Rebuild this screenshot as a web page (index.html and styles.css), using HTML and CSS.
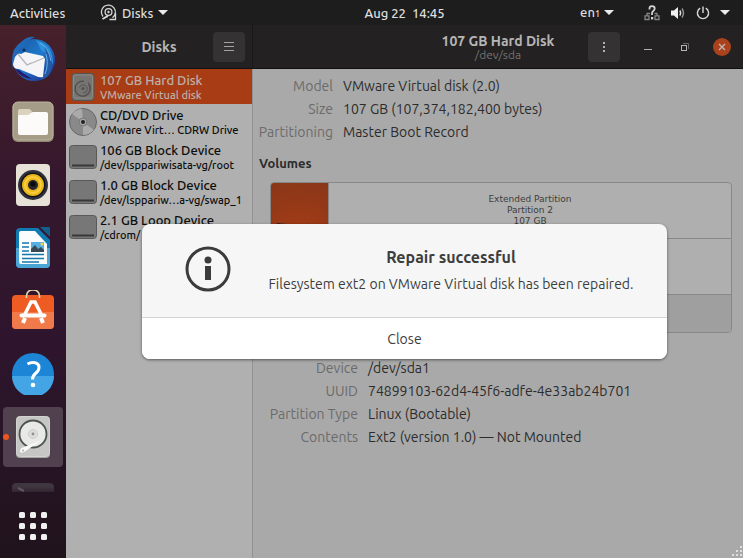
FILE: index.html
```html
<!DOCTYPE html>
<html lang="en">
<head>
<meta charset="utf-8">
<title>Disks</title>
<link rel="stylesheet" href="styles.css">
</head>
<body>
<header class="topbar">
  <button class="topbar-btn activities" type="button">Activities</button>
  <button class="topbar-btn app-menu" type="button">
    <svg width="17" height="17" viewBox="0 0 17 17" fill="none" stroke="#d6d6d6" aria-hidden="true">
      <path d="M3 12.500A7 7 0 1 1 12.500 13.700M9.500 15.500H15.500V9" stroke-width="1.300"/>
      <circle cx="8.500" cy="8" r="3.400" stroke-width="1.300"/>
      <circle cx="8.500" cy="8" r="1.200" fill="#d6d6d6" stroke="none"/>
      <path d="M2.500 15L8 11.800" stroke-width="2"/>
    </svg>
    <span>Disks</span>
    <i class="caret"></i>
  </button>
  <time class="clock">Aug 22&nbsp; 14:45</time>
  <div class="tray">
    <button class="topbar-btn lang" type="button"><span>en<small>1</small></span><i class="caret"></i></button>
    <button class="topbar-btn status" type="button" aria-label="System menu">
      <svg width="16" height="16" viewBox="0 0 16 16" fill="none" aria-hidden="true">
        <path d="M3 10.500V8.500H6M13 10.500V8.500H10.500M1 10.800H5V14.500H1ZM11 10.800H15V14.500H11Z" stroke="#858585" stroke-width="1.300"/>
        <path d="M5.500 4.500V3.500Q5.500 1.200 8 1.200Q10.700 1.200 10.700 3.600Q10.700 5.100 9.200 6Q8 6.900 8 8.500V10" stroke="#d4d4d4" stroke-width="1.800"/>
        <rect x="7" y="12" width="2.200" height="2.400" fill="#d4d4d4"/>
      </svg>
      <svg width="16" height="16" viewBox="0 0 16 16" fill="none" aria-hidden="true">
        <path d="M1 5.500H4L8 2V14L4 10.500H1Z" fill="#f0f0f0"/>
        <path d="M9.800 5.500Q11.500 8 9.800 10.500" stroke="#e0e0e0" stroke-width="1.400"/>
        <path d="M12 3.500Q15 8 12 12.500" stroke="#969696" stroke-width="1.400"/>
      </svg>
      <svg width="14" height="16" viewBox="0 0 14 16" fill="none" stroke="#d8d8d8" stroke-width="1.400" aria-hidden="true">
        <path d="M4.200 3.200A5.600 5.600 0 1 0 9.800 3.200M7 1.500V8"/>
      </svg>
      <i class="caret"></i>
    </button>
  </div>
</header>

<div class="desktop">
  <nav class="dock" aria-label="Dock">
    <div class="launchers">
      <button class="launcher" type="button" aria-label="Thunderbird">
        <svg width="46" height="46" viewBox="0 0 46 46" aria-hidden="true">
          <defs><linearGradient id="bird" x1="0" y1="0" x2="1" y2="1"><stop offset="0" stop-color="#1b579e"/><stop offset=".5" stop-color="#1e79cc"/><stop offset="1" stop-color="#241a82"/></linearGradient></defs>
          <circle cx="24" cy="24" r="21" fill="url(#bird)"/>
          <path d="M3 33Q-1 14 11 6Q17 0 25 1Q17 4 14 10Q5 15 3 33Z" fill="#2168b8"/>
          <path d="M26 4Q44 9 43 29Q40 19 31 14Z" fill="#2e91dd"/>
          <path d="M34 10Q45 20 41 35Q38 43 30 44Q41 30 34 10Z" fill="#235aa6"/>
          <path d="M30 7Q39 12 41 25M36 18Q39 28 35 38" fill="none" stroke="#61b3ea" stroke-width="1"/>
          <path d="M5 21Q8 16 11 18L15 16L33 20L35 23L33 41Q29 42 26 40L9 33Q3 33 3 28Z" fill="#f5f5f7"/>
          <path d="M8 18L17 29L34 22M17 29L21 27" fill="none" stroke="#b4b3b8" stroke-width="1.300"/>
          <path d="M5 33Q10 42 22 43Q14 38 9 34Z" fill="#2a1a6c"/>
          <circle cx="14" cy="14" r="1.500" fill="#102c54"/>
        </svg>
      </button>
      <button class="launcher" type="button" aria-label="Files">
        <svg width="42" height="42" viewBox="0 0 42 42" aria-hidden="true">
          <rect x=".5" y="1" width="41" height="40" rx="5" fill="#918873"/>
          <rect x="1" y="1" width="40" height="38" rx="5" fill="#a69d88" stroke="#bdb49f"/>
          <path d="M6 13V10Q6 8 8 8H17Q19 8 20 11L34 12V18H6Z" fill="#dcd3bf"/>
          <path d="M6 15Q6 14 8 14H16L21 11H34Q36 11 36 13V32Q36 34 34 34H8Q6 34 6 32Z" fill="#fcfbf9"/>
        </svg>
      </button>
      <button class="launcher" type="button" aria-label="Rhythmbox">
        <svg width="42" height="42" viewBox="0 0 42 42" aria-hidden="true">
          <rect x="4" y="0" width="34" height="42" rx="4" fill="#e7e2d8"/>
          <circle cx="21" cy="21" r="15" fill="#30313c"/><circle cx="21" cy="21" r="12.500" fill="#11131b"/>
          <circle cx="21" cy="21" r="11" fill="#eab51b"/><circle cx="21" cy="21" r="8" fill="none" stroke="#f8cd3e" stroke-width="2"/>
          <circle cx="21" cy="21" r="5" fill="#24262b"/><circle cx="21" cy="20" r="2.500" fill="#080a0d"/>
        </svg>
      </button>
      <button class="launcher" type="button" aria-label="LibreOffice Writer">
        <svg width="42" height="42" viewBox="0 0 42 42" aria-hidden="true">
          <path d="M8 1H26L38 13V37Q38 41 34 41H8Q4 41 4 37V5Q4 1 8 1Z" fill="#127ab2"/>
          <path d="M4 21H38V37Q38 41 34 41H8Q4 41 4 37Z" fill="#4ca6d5"/>
          <path d="M9 4H23L35 17V37H9Q7 37 7 35V6Q7 4 9 4Z" fill="#fafcfd"/>
          <path d="M28 0H37Q38 0 38 2V10Z" fill="#135f8b"/>
          <path d="M10 16H17M10 20H17M10 24H17M10 27.500H32M10 31.500H32M10 35H27" stroke="#1777aa" stroke-width="1.500"/>
          <rect x="19" y="15" width="13" height="10" fill="#58aee0"/>
          <path d="M19 25V22L23 18L26 22L29 20L32 23V25Z" fill="#384956"/><circle cx="30" cy="17" r="1.500" fill="#f1d44e"/>
        </svg>
      </button>
      <button class="launcher" type="button" aria-label="Ubuntu Software">
        <svg width="42" height="42" viewBox="0 0 42 42" aria-hidden="true">
          <rect y="5" width="42" height="34" rx="4" fill="#ee5b23"/>
          <path d="M0 22H42V35Q42 39 38 39H4Q0 39 0 35Z" fill="#f17a4a"/>
          <path d="M14.500 8V6Q15 0 21 0Q27 0 27.500 6V8" fill="none" stroke="#ead6a5" stroke-width="1.600"/>
          <g fill="none" stroke="#fff"><path d="M12.500 25L19 12H23L29.500 25" stroke-width="3.500"/><path d="M9.500 25.500H32.500" stroke-width="4" stroke-linecap="round"/><path d="M13 28L11 33M29 28L31 33" stroke-width="4"/></g>
        </svg>
      </button>
      <button class="launcher" type="button" aria-label="Help">
        <svg width="42" height="42" viewBox="0 0 42 42" aria-hidden="true">
          <circle cx="21" cy="21" r="21" fill="#1d85d6"/>
          <path d="M0 23H42A21 21 0 0 1 0 23Z" fill="#43a5e5"/>
          <path d="M15.500 11Q18 9.500 21 9.500Q27 9.500 27 14.500Q27 17.500 23.500 20.500Q20.500 23 20.500 26.500" fill="none" stroke="#fff" stroke-width="3"/>
          <circle cx="21" cy="32" r="2.300" fill="#fff"/>
        </svg>
      </button>
      <button class="launcher running" type="button" aria-label="Disks">
        <svg width="42" height="42" viewBox="0 0 42 42" aria-hidden="true">
          <rect x="4" y="0" width="34" height="42" rx="4" fill="#a5a5a3"/>
          <rect x="4.500" y=".5" width="33" height="40" rx="4" fill="#c6c6c4" stroke="#d3d3d1"/>
          <circle cx="21" cy="18" r="13.500" fill="#e9e9e8" stroke="#4c5350" stroke-width="1.800"/>
          <circle cx="21" cy="18" r="4.500" fill="#ddd" stroke="#cdcdcb"/><circle cx="21" cy="18" r="1.400" fill="#919191"/>
          <path d="M30 24L12 36Q8 38 8 35Q8 32 12 31Z" fill="#fafafa"/><circle cx="11" cy="34.500" r="1" fill="#aaa"/>
        </svg>
      </button>
      <button class="launcher" type="button" aria-label="Terminal">
        <svg width="42" height="42" viewBox="0 0 42 42" aria-hidden="true">
          <defs><linearGradient id="fade" x1="0" y1="0" x2="0" y2="1"><stop offset=".1" stop-color="#40363f"/><stop offset=".3" stop-color="#2b1f29"/></linearGradient></defs>
          <path d="M0 42V8Q0 4 5 4H37Q42 4 42 8V42Z" fill="url(#fade)"/>
          <path d="M6 9L12 12" stroke="#5e5660" stroke-width="2"/>
        </svg>
      </button>
    </div>
    <button class="launcher" type="button" aria-label="Show applications">
      <svg width="30" height="30" viewBox="0 0 30 30" fill="#f1f0f0" aria-hidden="true">
        <rect x="1" y="1" width="6" height="6" rx="1.500"/><rect x="12" y="1" width="6" height="6" rx="1.500"/><rect x="23" y="1" width="6" height="6" rx="1.500"/>
        <rect x="1" y="12" width="6" height="6" rx="1.500"/><rect x="12" y="12" width="6" height="6" rx="1.500"/><rect x="23" y="12" width="6" height="6" rx="1.500"/>
        <rect x="1" y="23" width="6" height="6" rx="1.500"/><rect x="12" y="23" width="6" height="6" rx="1.500"/><rect x="23" y="23" width="6" height="6" rx="1.500"/>
      </svg>
    </button>
  </nav>

  <div class="window">
    <aside class="sidebar">
      <div class="headerbar">
        <h1 class="title">Disks</h1>
        <div class="controls">
          <button class="menu-btn" type="button" aria-label="Menu">
            <svg width="12" height="12" viewBox="0 0 12 12" stroke="#a2a2a2" aria-hidden="true"><path d="M1 1.500H11M1 5.500H11M1 9.500H11"/></svg>
          </button>
        </div>
      </div>
      <ul class="devices">
        <li><button class="device selected" type="button">
          <svg width="28" height="28" viewBox="0 0 28 28" fill="none" aria-hidden="true">
            <rect x="3" y=".5" width="22" height="27" rx="3" fill="#777572" stroke="#565451"/>
            <rect x="4.500" y="2" width="19" height="23" rx="2" stroke="#8c8a87"/>
            <path d="M19.500 11A7.500 7.500 0 1 1 15 8.300" stroke="#4f4d4b" stroke-width="1.200"/>
            <path d="M19 9Q22 12 21 16M10.500 14.500A4 4 0 1 1 14 20" stroke="#565452"/><circle cx="14" cy="15.500" r="1.500" fill="#53514f"/>
          </svg>
          <span class="device-text"><b>107 GB Hard Disk</b><small>VMware Virtual disk</small></span></button></li>
        <li><button class="device" type="button">
          <svg width="28" height="28" viewBox="0 0 28 28" aria-hidden="true">
            <circle cx="14" cy="14" r="13.500" fill="#898989" stroke="#666"/>
            <path d="M14 14L3 6Q7 1 13 1ZM14 14L25 22Q20 27 14 27Z" fill="#aaa"/>
            <circle cx="14" cy="14" r="4" fill="#a4a4a4" stroke="#777"/><circle cx="14" cy="14" r="2" fill="#24221f"/>
          </svg>
          <span class="device-text"><b>CD/DVD Drive</b><small>VMware Virt… CDRW Drive</small></span></button></li>
        <li><button class="device" type="button">
          <svg width="28" height="28" viewBox="0 0 28 28" aria-hidden="true"><rect x=".5" y="2.500" width="27" height="23" rx="3" fill="#777" stroke="#595959"/><path d="M3 22.500H25" stroke="#383838" stroke-width="2"/></svg>
          <span class="device-text"><b>106 GB Block Device</b><small>/dev/lsppariwisata-vg/root</small></span></button></li>
        <li><button class="device" type="button">
          <svg width="28" height="28" viewBox="0 0 28 28" aria-hidden="true"><rect x=".5" y="2.500" width="27" height="23" rx="3" fill="#777" stroke="#595959"/><path d="M3 22.500H25" stroke="#383838" stroke-width="2"/></svg>
          <span class="device-text"><b>1.0 GB Block Device</b><small>/dev/lsppariw…a-vg/swap_1</small></span></button></li>
        <li><button class="device" type="button">
          <svg width="28" height="28" viewBox="0 0 28 28" aria-hidden="true"><rect x=".5" y="2.500" width="27" height="23" rx="3" fill="#777" stroke="#595959"/><path d="M3 22.500H25" stroke="#383838" stroke-width="2"/></svg>
          <span class="device-text"><b>2.1 GB Loop Device</b><small>/cdrom/</small></span></button></li>
      </ul>
    </aside>

    <main class="content">
      <div class="headerbar">
        <div class="heading"><h2 class="title">107 GB Hard Disk</h2><p class="subtitle">/dev/sda</p></div>
        <div class="controls">
          <button class="menu-btn" type="button" aria-label="Drive options">
            <svg width="12" height="12" viewBox="0 0 12 12" fill="#b0b0b0" aria-hidden="true"><rect x="5" y="1" width="2" height="2"/><rect x="5" y="5" width="2" height="2"/><rect x="5" y="9" width="2" height="2"/></svg>
          </button>
          <button class="win-btn" type="button" aria-label="Minimize"><svg width="10" height="10" viewBox="0 0 10 10" stroke="#b0b0b0" aria-hidden="true"><path d="M1 7.500H9"/></svg></button>
          <button class="win-btn" type="button" aria-label="Restore"><svg width="10" height="10" viewBox="0 0 10 10" fill="none" aria-hidden="true"><path d="M3 1.500H8.500V7" stroke="#666"/><rect x="1.500" y="3.500" width="5" height="5" stroke="#b5b5b5"/></svg></button>
          <button class="win-btn close" type="button" aria-label="Close window"><svg width="8" height="8" viewBox="0 0 8 8" stroke="#c4b6b1" stroke-width="1.400" aria-hidden="true"><path d="M1 1L7 7M7 1L1 7"/></svg></button>
        </div>
      </div>
      <div class="panel">
        <dl class="facts">
          <dt>Model</dt><dd>VMware Virtual disk (2.0)</dd>
          <dt>Size</dt><dd>107 GB (107,374,182,400 bytes)</dd>
          <dt>Partitioning</dt><dd>Master Boot Record</dd>
        </dl>
        <h3 class="section">Volumes</h3>
        <div class="volumes">
          <div class="map">
            <div class="part active">Filesystem</div>
            <div class="extended">
              <div class="part">Extended Partition<br>Partition 2<br>107 GB</div>
              <div class="part"></div>
            </div>
          </div>
          <div class="toolbar"></div>
        </div>
        <dl class="facts volume-facts">
          <dt>Device</dt><dd>/dev/sda1</dd>
          <dt>UUID</dt><dd>74899103-62d4-45f6-adfe-4e33ab24b701</dd>
          <dt>Partition Type</dt><dd>Linux (Bootable)</dd>
          <dt>Contents</dt><dd>Ext2 (version 1.0) — Not Mounted</dd>
        </dl>
      </div>
      <svg class="grip" width="12" height="12" viewBox="0 0 12 12" fill="#e0ded8" aria-hidden="true"><path d="M9 1h2v2h-2zM9 5h2v2h-2zM5 5h2v2h-2zM9 9h2v2h-2zM5 9h2v2h-2zM1 9h2v2h-2z"/></svg>
    </main>

    <div class="overlay">
      <section class="dialog" role="alertdialog" aria-labelledby="dialog-title" aria-describedby="dialog-text">
        <div class="dialog-body">
          <svg width="46" height="46" viewBox="0 0 46 46" aria-hidden="true">
            <circle cx="23" cy="23" r="21" fill="none" stroke="#3b3b3b" stroke-width="3"/>
            <circle cx="23" cy="14" r="3.500" fill="#3b3b3b"/><rect x="20" y="20" width="6" height="14" fill="#3b3b3b"/>
          </svg>
          <div class="message">
            <h2 id="dialog-title">Repair successful</h2>
            <p id="dialog-text">Filesystem ext2 on VMware Virtual disk has been repaired.</p>
          </div>
        </div>
        <button class="dialog-close" type="button">Close</button>
      </section>
    </div>
  </div>
</div>
</body>
</html>
```
FILE: styles.css
```css
* { box-sizing: border-box; }

body {
  margin: 0;
  height: 100vh;
  display: flex;
  flex-direction: column;
  overflow: hidden;
  background: #1d1d1d;
  font: 14px/16px "Ubuntu", "Noto Sans", sans-serif;
  color: #2c2c2c;
}

button {
  margin: 0;
  padding: 0;
  border: 0;
  background: none;
  color: inherit;
  font: inherit;
}

h1, h2, h3, p, ul, dl, dd { margin: 0; padding: 0; }
ul { list-style: none; }
svg { display: block; flex: none; }

/* Top bar */
.topbar {
  display: grid;
  grid-template-columns: 66px 1fr auto 1fr;
  align-items: center;
  height: 25px;
  color: #dedede;
  font-size: 13px;
  font-weight: 500;
  white-space: nowrap;
}
.topbar-btn { display: flex; align-items: center; }
.activities { padding-left: 10px; }
.app-menu { gap: 5px; padding-left: 34px; }
.tray { display: flex; justify-content: flex-end; gap: 30px; padding-right: 13px; }
.lang { gap: 4px; }
.lang small { font-size: 9px; }
.status { gap: 10px; }
.caret {
  border: 5px solid transparent;
  border-top-color: #ebebeb;
  border-bottom: 0;
}

/* Dock */
.desktop { flex: 1; display: flex; min-height: 0; }
.dock {
  width: 66px;
  display: flex;
  flex-direction: column;
  align-items: center;
  gap: 4px;
  padding: 4px 0 2px;
  background: linear-gradient(#47212b, #35182d 28%, #2e152d 60%, #20131c);
}
.launchers {
  flex: 1;
  min-height: 0;
  overflow: hidden;
  display: flex;
  flex-direction: column;
  gap: 3px;
}
.launcher {
  flex: none;
  width: 60px;
  height: 60px;
  display: grid;
  place-items: center;
  position: relative;
}
.running { border-radius: 4px; background: #51404e; }
.running::before {
  content: "";
  position: absolute;
  left: 0;
  top: 27px;
  width: 6px;
  height: 6px;
  border-radius: 50%;
  background: #ee5421;
}

/* Window */
.window { flex: 1; min-width: 0; display: flex; position: relative; background: #a9a9a9; }
.sidebar {
  width: 187px;
  display: flex;
  flex-direction: column;
  background: #b0b0b0;
}
.sidebar .headerbar { border-right: 1px solid #191818; }
.devices { flex: 1; border-right: 1px solid #929292; }
.content { flex: 1; min-width: 0; position: relative; }
.headerbar {
  display: grid;
  grid-template-columns: 1fr auto 1fr;
  align-items: center;
  height: 44px;
  border-bottom: 1px solid #121111;
  background: #232121;
  color: #b5b5b5;
}
.title { grid-column: 2; font-size: 14px; line-height: 16px; font-weight: 700; }
.heading { grid-column: 2; text-align: center; }
.subtitle { font-size: 12px; line-height: 12px; color: #737171; }
.controls { grid-column: 3; display: flex; align-items: center; justify-content: flex-end; gap: 19px; }
.sidebar .controls { padding-right: 7px; }
.content .controls { padding-right: 12px; }
.menu-btn {
  width: 32px;
  height: 30px;
  display: grid;
  place-items: center;
  border-radius: 4px;
  background: #343232;
}
.win-btn { width: 18px; height: 18px; display: grid; place-items: center; }
.close { border-radius: 50%; background: #aa421d; }

.device {
  width: 100%;
  height: 35px;
  display: flex;
  align-items: center;
  gap: 3px;
  padding-left: 3px;
  text-align: left;
  white-space: nowrap;
  color: #0c0c0c;
}
.selected { background: #a73c15; color: #bdb0aa; }
.device b, .device small { display: block; font-weight: 500; }
.device b { font-size: 13px; line-height: 16px; }
.device small { font-size: 11px; line-height: 14px; }

/* Drive details */
.panel { padding: 6px 11px 0 6px; }
.facts {
  display: grid;
  grid-template-columns: 74px 1fr;
  column-gap: 10px;
  line-height: 23px;
  white-space: nowrap;
}
.facts dt { text-align: right; color: #6b6b6b; justify-self: end; }
.section { margin: 11px 0; font-size: 13px; line-height: 16px; }
.volumes {
  margin-left: 11px;
  border: 1px solid #888;
  border-radius: 4px;
  overflow: hidden;
  background: #afafaf;
  font: 9px/11px "DejaVu Sans", sans-serif;
}
.map { display: flex; height: 111px; }
.part { flex: 1; display: grid; place-content: center; text-align: center; color: #3d3d3d; }
.part + .part { border-top: 1px solid #888; }
.active {
  flex: none;
  width: 58px;
  border-right: 1px solid #888;
  background: radial-gradient(circle, #a73c15, #883719);
  color: #33231d;
  padding-bottom: 22px;
}
.extended { flex: 1; display: flex; flex-direction: column; }
.toolbar { height: 38px; border-top: 1px solid #888; background: #9f9f9f; }
.volume-facts { grid-template-columns: 99px 1fr; margin-top: 24px; }
.grip { position: absolute; right: 0; bottom: 1px; }

/* Message dialog */
.overlay { position: absolute; inset: 0; display: grid; place-items: center; }
.dialog {
  border-radius: 8px;
  overflow: hidden;
  background: #f6f6f6;
  box-shadow: 0 1px 3px rgba(0, 0, 0, .5);
  color: #3d3d3d;
}
.dialog-body { display: flex; align-items: flex-start; gap: 37px; padding: 22px 33px 25px 43px; }
.message { text-align: center; }
.message h2 { font-size: 16px; line-height: 22px; margin-bottom: 8px; }
.message p { line-height: 16px; }
.dialog-close { width: 100%; height: 42px; border-top: 1px solid #d3d3d3; background: #fff; }
```
